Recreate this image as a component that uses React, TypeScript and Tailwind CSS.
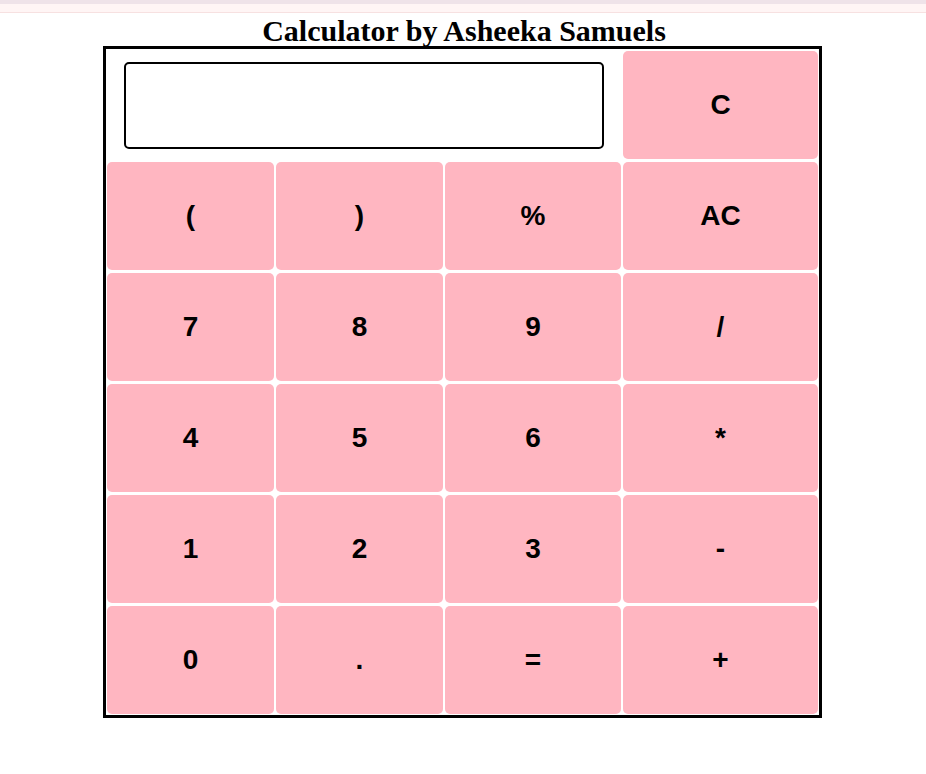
const rows: string[][] = [
  ["(", ")", "%", "AC"],
  ["7", "8", "9", "/"],
  ["4", "5", "6", "*"],
  ["1", "2", "3", "-"],
  ["0", ".", "=", "+"],
];

function Key({ label }: { label: string }) {
  return (
    <button className="h-[108px] rounded-[5px] bg-[#ffb6c1] text-black text-[28px] font-bold font-['Liberation_Sans',Arial,sans-serif] flex items-center justify-center">
      {label}
    </button>
  );
}

export default function App() {
  return (
    <div className="min-h-screen bg-white">
      {/* browser strip */}
      <div className="h-[4px] bg-[#efe3e9]" />
      <div className="h-[9px] bg-[#fff5f5] border-b border-[#f7e1e1]" />

      <h1 className="text-center text-[30px] leading-[34px] pt-[1px] font-bold text-black font-['Liberation_Serif','Times_New_Roman',serif] -mb-[2px] pl-[2px]">
        Calculator by Asheeka Samuels
      </h1>

      <div className="ml-[103px] w-[719px] border-[3px] border-black pt-[2px] pb-[1px] px-[1px]">
        <div className="grid grid-cols-[167px_167px_176px_195px] gap-x-[2px] gap-y-[3px]">
          {/* display row */}
          <div className="col-span-3 flex items-center justify-center">
            <input
              type="text"
              readOnly
              className="w-[480px] h-[87px] border-2 border-black rounded-[5px] bg-white outline-none"
            />
          </div>
          <Key label="C" />

          {rows.map((row, i) =>
            row.map((k) => <Key key={i + k} label={k} />)
          )}
        </div>
      </div>
    </div>
  );
}
